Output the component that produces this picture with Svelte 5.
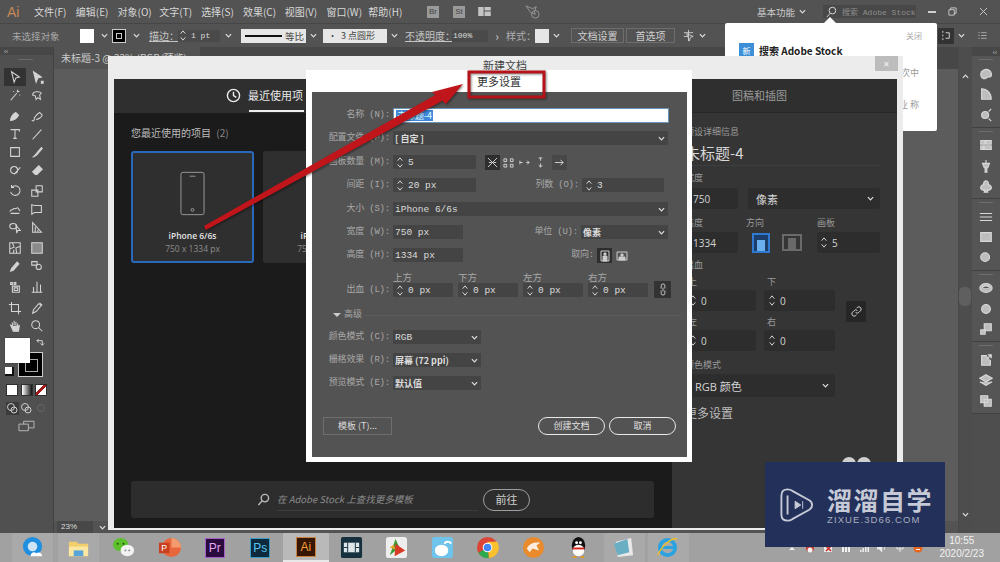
<script>
  const menus = ["文件(F)", "编辑(E)", "对象(O)", "文字(T)", "选择(S)", "效果(C)", "视图(V)", "窗口(W)", "帮助(H)"];

  // left toolbar, two columns, grouped like the real Ai panel
  const toolGroups = [
    [
      "M4 2l9 6-4 1 -2 5z",
      "M4 2l9 6-4 1-2 5zM13 13h2v2h-2z",
      "M3 14L10 6M11 2v3M13 4h-3M6 4h1M13 8h1",
      "M3 8c0-4 8-5 10-2l-2 2 1 5-3-2-2 2-1-4z"
    ],
    [
      "M3 13c0-4 3-8 6-9l3 3c-1 3-5 6-9 6zM3 13l4-4",
      "M2 13c3 2 3-2 3-3 2-3 4-5 6-6l3 3c-1 3-5 5-7 5",
      "M3 3h10v2M8 3v10M6 13h4",
      "M3 14L13 3",
      "M3 3h10v10H3z",
      "M3 14c2-1 3-3 4-4l6-7 1 1-6 7c-1 1-3 2-5 3z",
      "M3 8a4 4 0 1 0 8 0 4 4 0 1 0-8 0M7 13l7-8",
      "M3 10l7-7 4 4-6 6H6z"
    ],
    [
      "M4 4a5.5 5.5 0 1 1-1 5M4 1v3h3",
      "M2 7h7v7H2zM7 2h7v7H7z",
      "M2 11c2-4 3-1 4-3s2 1 4-1 2 3 4 3M3 13h10",
      "M2 3l3 1h8v8H5l-3 2z",
      "M2 7a4 3 0 1 0 8 0 4 3 0 1 0-8 0M9 6l5 6-3 0-1 3z",
      "M3 14V3l10 11zM6 8v6M9 11v3"
    ],
    [
      "M2 2h12v12H2zM5 2l2 5-5 2M14 6l-5 2 1 6M6 14l1-4",
      "M2 2h12v12H2z",
      "M3 14l1-3 6-7 2 2-6 7zM10 3l3 3",
      "M2 3h6v4H2zM7 9a3 3 0 1 0 6 0 3 3 0 1 0-6 0"
    ],
    [
      "M3 3h2v2H3zM7 3h2v2H7zM5 7h8v7H5zM7 9h4v3H7z",
      "M2 14h12M4 14V8M8 14V2M12 14V5"
    ],
    [
      "M4 1v11h11M1 4h11v11",
      "M3 14l1-4 6-7 3 2-6 7zM11 2l3 3",
      "M5 8V4M7 7V2M9 7V3M11 8V5M5 8L3 7l3 7h6l1-7",
      "M2 6.5a4.5 4.5 0 1 0 9 0 4.5 4.5 0 1 0-9 0M10 10l4 4"
    ]
  ];
  const filledTools = ["0-1", "1-0", "1-5", "1-7", "3-2", "5-2"];

  const dockGroups = [
    ["M2 8c0-4 5-6 8-5s5 4 4 7-3 0-5 2-7 2-7-4z", "M3 14V2c6 0 11 5 11 12z", "M3 8a4 4 0 1 0 8 0 4 4 0 1 0-8 0M11 4l3-3M11 12l3 3"],
    ["M2 3h5v4H2zM8 3h6v4H8zM2 9h3v4H2zM6 9h8v4H6z", "M8 1v4M4 5h8l-2 5H6zM7 10h2v5H7z", "M8 2a3 3 0 0 1 2 5 3 3 0 1 1-1 5l1 3H6l1-3a3 3 0 1 1-1-5 3 3 0 0 1 2-5z"],
    ["M1 4h14M1 8h14M1 12h14", "M2 3h12v10H2z", "M2 7a5 5 0 1 0 10 0 5 5 0 1 0-10 0"],
    ["M1 8a7 5 0 1 0 14 0 7 5 0 1 0-14 0M4 8a4 2.5 0 0 1 8 0", "M3 8a5 5 0 1 0 10 0 5 5 0 1 0-10 0", "M6 2h8v8H6zM2 9h5v5H2z"],
    ["M9 3H3v11h10V8M9 7l5-5M10 2h4v4", "M8 2l7 4-7 4-7-4zM1 10l7 4 7-4", "M2 2h8v8H2zM6 6h8v8H6z"]
  ];

  const bleedFields = ["上方", "下方", "左方", "右方"];
</script>

{#snippet chev(cls = "")}
  <svg class="chev {cls}" viewBox="0 0 8 5"><path d="M1 1l3 3 3-3" /></svg>
{/snippet}

{#snippet stepper()}
  <svg class="stepper" viewBox="0 0 8 14"><path d="M1.5 5l2.5-3 2.5 3M1.5 9l2.5 3 2.5-3" /></svg>
{/snippet}

<div class="app">
  <header class="menubar">
    <span class="logo">Ai</span>
    <nav class="menus">
      {#each menus as m}<span>{m}</span>{/each}
    </nav>
    <span class="app-btn br">Br</span>
    <span class="app-btn st">St</span>
    <svg class="layout-ic" viewBox="0 0 14 10"><path d="M0 0h6v10H0zM7 0h7v4H7zM7 5h7v5H7z" /></svg>
    <svg class="rocket" viewBox="0 0 16 16"><path d="M1 2l7 3 4-2-2 5 1 3-5-2z" /><circle cx="11" cy="11" r="4" /></svg>
    <span class="workspace">基本功能</span>
    {@render chev("ws-chev")}
    <div class="searchbox">
      <svg viewBox="0 0 14 14"><circle cx="8" cy="6" r="3.6" /><path d="M5.5 9L2 13" /></svg>
      <span>搜索 Adobe Stock</span>
    </div>
    <div class="winbtns">
      <span class="min"></span>
      <svg viewBox="0 0 10 10"><path d="M1 3h6v6H1zM3 3V1h6v6H7" /></svg>
      <svg viewBox="0 0 10 10"><path d="M1 1l8 8M9 1l-8 8" /></svg>
    </div>
  </header>

  <div class="optbar">
    <span class="nosel">未选择对象</span>
    <span class="swatch fill"></span>
    {@render chev()}
    <span class="swatch strokesw"><i></i></span>
    {@render chev()}
    <span class="ul lbl-stroke">描边：</span>
    <span class="ptfield">{@render stepper()}<b>1 pt</b></span>
    {@render chev()}
    <span class="lineselect"><i></i>等比</span>
    {@render chev()}
    <span class="dotselect">• &nbsp;3 点圆形</span>
    {@render chev()}
    <span class="ul lbl-opacity">不透明度：</span>
    <span class="opfield">100%</span>
    <span class="gt">›</span>
    <span class="ul lbl-style">样式：</span>
    <span class="swatch stylesw"></span>
    {@render chev()}
    <span class="optbtn wide">文档设置</span>
    <span class="optbtn">首选项</span>
    <svg class="arrange" viewBox="0 0 14 14"><path d="M2 4h10M2 8h4M7 1v12M5 5l7 3-3 1-1 4z" /></svg>
    {@render chev()}
    <span class="spring"></span>
    <span class="alignbtn"><svg viewBox="0 0 12 12"><path d="M2 1v2M2 5v2M2 9v2M5 3h4v6H5" /></svg></span>
    {@render chev()}
    <svg class="listic" viewBox="0 0 12 10"><path d="M0 1h2M4 1h8M0 5h2M4 5h8M0 9h2M4 9h8" /></svg>
  </div>

  <div class="main">
    <aside class="toolbar">
      <div class="panelhead"><span>‹‹</span></div>
      <div class="grip"></div>
      {#each toolGroups as group, g}
        <div class="toolgroup">
          {#each group as d, i}
            <span class="tool" class:active={g === 0 && i === 0} class:filled={filledTools.includes(`${g}-${i}`)} class:grad={g === 3 && i === 1}>
              <svg viewBox="0 0 16 16"><path {d} /></svg>
            </span>
          {/each}
        </div>
      {/each}

      <div class="colorwell">
        <span class="wfill"></span>
        <span class="wstroke"><i></i></span>
        <svg class="wswap" viewBox="0 0 10 10"><path d="M1 3h6v5M1 3l2-2M1 3l2 2M7 8l-2-2M7 8l2-2" /></svg>
        <span class="wdefault"></span>
      </div>
      <div class="moderow">
        <span class="m-color"></span>
        <span class="m-grad"></span>
        <span class="m-none"></span>
      </div>
      <div class="moderow draw">
        <span class="d-on"><svg viewBox="0 0 12 12"><circle cx="5" cy="5" r="3.5" /><circle cx="8" cy="8" r="3" /></svg></span>
        <span><svg viewBox="0 0 12 12"><circle cx="5" cy="5" r="3.5" /><circle cx="8" cy="8" r="3" /></svg></span>
        <span class="dim"><svg viewBox="0 0 12 12"><circle cx="6" cy="6" r="3.5" /></svg></span>
      </div>
      <svg class="screenmode" viewBox="0 0 18 12"><path d="M1 4h10v7H1zM6 4V1h11v7h-6" /></svg>
    </aside>

    <section class="canvas">
      <div class="doctabs"><span class="doctab">未标题-3 @ 23% (RGB/预览)</span></div>
      <div class="canvas-area"></div>
      <div class="status"><span class="zoomval">23%</span>{@render chev()}</div>
    </section>

    <div class="vstrip">
      <span class="handle"></span>
      <span class="sc-up">{@render chev("flip")}</span>
      <span class="sc-down">{@render chev()}</span>
    </div>

    <aside class="dock">
      <div class="dockhead">‹‹</div>
      {#each dockGroups as group}
        <div class="dockgroup">
          <span class="dockgrip"></span>
          {#each group as d}
            <svg viewBox="0 0 16 16"><path {d} /></svg>
          {/each}
        </div>
      {/each}
    </aside>
  </div>

  <footer class="taskbar">
    <span class="task on"><svg viewBox="0 0 24 24"><circle cx="12" cy="11" r="10" fill="#1f8fe0" /><circle cx="12" cy="11" r="5" fill="#cfe4f5" /><path d="M10 21c0-4 4-5 6-3 3-2 6 0 6 3z" fill="#fff" /></svg></span>
    <span class="task on"><svg viewBox="0 0 24 24"><path d="M2 6h8l2 2h10v13H2z" fill="#f2cf6b" /><path d="M2 11h20v10H2z" fill="#fbe6a2" /><path d="M7 15h10v6H7z" fill="#58a6d8" /></svg></span>
    <span class="task"><svg viewBox="0 0 24 24"><ellipse cx="9" cy="9" rx="8" ry="7" fill="#5cc12c" /><ellipse cx="16" cy="15" rx="7" ry="6" fill="#f2f2f2" /><circle cx="6" cy="8" r="1" fill="#26500c" /><circle cx="12" cy="8" r="1" fill="#26500c" /><circle cx="14" cy="15" r="1" fill="#888" /><circle cx="18" cy="15" r="1" fill="#888" /></svg></span>
    <span class="task"><svg viewBox="0 0 24 24"><circle cx="14" cy="12" r="10" fill="#e8663c" /><path d="M14 12V2a10 10 0 0 1 10 10z" fill="#f39b6f" /><rect x="1" y="7" width="11" height="11" fill="#c9401f" /><text x="3.5" y="16" class="t-ic white">P</text></svg></span>
    <span class="task"><span class="appic pr">Pr</span></span>
    <span class="task"><span class="appic ps">Ps</span></span>
    <span class="task cur"><span class="appic ai">Ai</span></span>
    <span class="task"><svg viewBox="0 0 24 24"><rect x="1" y="1" width="22" height="22" rx="2" fill="#16303e" /><path d="M4 7h16v10H4z" fill="#dfe6ea" /><path d="M8 7v10M16 7v10M4 12h4M16 12h4" stroke="#16303e" /></svg></span>
    <span class="task"><svg viewBox="0 0 24 24"><rect x="1" y="1" width="22" height="22" rx="3" fill="#eee" /><path d="M5 20L11 3l4 9z" fill="#3c9a34" /><path d="M11 8l10 7-11 6z" fill="#d83a26" /><path d="M5 12l4-3 2 5z" fill="#e8a026" /></svg></span>
    <span class="task"><svg viewBox="0 0 24 24"><rect x="1" y="1" width="22" height="22" rx="3" fill="#6fc4ec" /><ellipse cx="11" cy="15" rx="7" ry="6" fill="#fff" /><path d="M14 8a4 4 0 0 1 7 0" fill="none" stroke="#fff" stroke-width="2" /></svg></span>
    <span class="task"><svg viewBox="0 0 24 24"><circle cx="12" cy="12" r="11" fill="#dc4437" /><path d="M12 12L2.5 17.500a11 11 0 0 0 11 5.400z" fill="#2da94f" /><path d="M12 6h10a11 11 0 0 1-8.500 17z" fill="#fbc02d" /><circle cx="12" cy="12" r="5" fill="#fff" /><circle cx="12" cy="12" r="4" fill="#4285f4" /></svg></span>
    <span class="task"><svg viewBox="0 0 24 24"><circle cx="12" cy="12" r="11" fill="#e98a2c" /><path d="M5 13c3-6 9-7 14-6l-4 3 3 5-7-2-3 4z" fill="#fbeee0" /></svg></span>
    <span class="task"><svg viewBox="0 0 24 24"><ellipse cx="12" cy="10" rx="7" ry="9" fill="#111" /><ellipse cx="12" cy="15" rx="6" ry="6" fill="#fff" /><path d="M6 12h12v2H6z" fill="#d8261c" /><circle cx="10" cy="7" r="1.500" fill="#fff" /><circle cx="14" cy="7" r="1.500" fill="#fff" /><path d="M6 22h4M14 22h4" stroke="#e89a1c" stroke-width="2" /></svg></span>
    <span class="task on narrow"><svg viewBox="0 0 24 24"><path d="M4 6l16-4 2 18-16 2z" fill="#e8e8e8" /><path d="M2 8l14-5 2 14-12 3z" fill="#6aaec4" /></svg></span>
    <span class="task on narrow"><svg viewBox="0 0 24 24"><circle cx="12" cy="12" r="8" fill="none" stroke="#2aa3e0" stroke-width="4" /><path d="M5 12h14" stroke="#2aa3e0" stroke-width="3" /><path d="M2 20C6 10 16 2 22 3" fill="none" stroke="#f0c020" stroke-width="1.500" /></svg></span>
    <div class="tray">
      <svg viewBox="0 0 10 10"><path d="M2 7l3-3 3 3z" fill="#f0f0f0" /></svg>
      <svg viewBox="0 0 10 10"><circle cx="5" cy="5" r="4" fill="#c73a30" /><circle cx="5" cy="7" r="2.500" fill="#f4f4f4" /></svg>
      <svg viewBox="0 0 10 10"><path d="M1 1h8v8H1z" fill="#e8e8e8" /><path d="M3 3l5 5M8 3l-5 5" stroke="#cc2a22" stroke-width="1.500" /></svg>
      <svg viewBox="0 0 10 10"><path d="M1 4h2v5H1zM4 2h2v7H4zM7 3h2v6H7z" fill="#f0f0f0" /></svg>
      <svg viewBox="0 0 10 10"><path d="M1 7h1.500v2H1zM3.500 5H5v4H3.500zM6 3h1.500v6H6zM8.500 1H10v8H8.500z" fill="#ececec" /></svg>
      <svg viewBox="0 0 10 10"><path d="M0 4h2l3-3v8L2 6H0zM7 3c1 1 1 3 0 4" fill="#ececec" stroke="#ececec" stroke-width=".5" /></svg>
      <svg viewBox="0 0 10 10"><path d="M2 3h6v3H2zM5 1v8" stroke="#e4e4e4" /></svg>
      <svg viewBox="0 0 10 10"><circle cx="5" cy="5" r="4.500" fill="#e8641e" /><path d="M3 3.500h4M3 6.500h4" stroke="#fff" /></svg>
    </div>
    <div class="clock"><span>10:55</span><span>2020/2/23</span></div>
  </footer>

  <!-- stock tip -->
  <div class="stockpop">
    <span class="pop-notch"></span>
    <div class="pop-close">关闭</div>
    <div class="pop-title"><span class="pop-ic">新</span><b>搜索 Adobe Stock</b></div>
    <div class="pop-line">次中</div>
    <div class="pop-line second">业 称</div>
  </div>

  <!-- new document window -->
  <div class="newdoc">
    <div class="nd-head"><span class="nd-close">✕</span></div>
    <div class="nd-body">
      <div class="nd-left">
        <div class="tabs">
          <div class="tab current">
            <svg viewBox="0 0 16 16"><circle cx="8" cy="8" r="6.500" /><path d="M8 4v4l3 2" /></svg>
            <span>最近使用项</span>
          </div>
        </div>
        <div class="recent">
          <div class="recent-title">您最近使用的项目 <em>(2)</em></div>
          <div class="cards">
            <div class="card picked">
              <svg viewBox="0 0 26 46"><rect x="1" y="1" width="24" height="44" rx="2" /><path d="M10 5h6" /><circle cx="13" cy="40" r="1.500" /></svg>
              <b>iPhone 6/6s</b>
              <span>750 x 1334 px</span>
            </div>
            <div class="card">
              <svg viewBox="0 0 26 46"><rect x="1" y="1" width="24" height="44" rx="2" /></svg>
              <b>iPhone 6/6s</b>
              <span>750 x 1334 px</span>
            </div>
          </div>
        </div>
        <div class="stockbar">
          <svg viewBox="0 0 14 14"><circle cx="8.500" cy="5.500" r="4" /><path d="M5.500 8.500L1.500 13" /></svg>
          <span class="stockq">在 Adobe Stock 上查找更多模板</span>
          <span class="gobtn">前往</span>
        </div>
      </div>

      <div class="nd-right">
        <div class="tabs right"><span>图稿和插图</span></div>
        <div class="details">
          <div class="d-cap first">预设详细信息</div>
          <div class="d-name">未标题-4</div>
          <div class="d-cap mt-w">宽度</div>
          <div class="d-row">
            <span class="d-field w1">750</span>
            <span class="d-field select">像素{@render chev()}</span>
          </div>
          <div class="d-row caps"><span class="w1">高度</span><span class="c2">方向</span><span>画板</span></div>
          <div class="d-row after-caps">
            <span class="d-field w1">1334</span>
            <span class="orient on"><i></i></span>
            <span class="orient"><i></i></span>
            <span class="d-field w3">{@render stepper()}<em>5</em></span>
          </div>
          <div class="d-cap mt-b">出血</div>
          <div class="bleed">
            <div class="bleed-grid">
              <div><label>上</label><span class="d-field w4">{@render stepper()}<em>0</em></span></div>
              <div><label>下</label><span class="d-field w4">{@render stepper()}<em>0</em></span></div>
              <div><label>左</label><span class="d-field w4">{@render stepper()}<em>0</em></span></div>
              <div><label>右</label><span class="d-field w4">{@render stepper()}<em>0</em></span></div>
            </div>
            <span class="d-link"><svg viewBox="0 0 14 14"><path d="M6 8a2.500 2.500 0 0 0 3.500 0l2-2A2.500 2.500 0 0 0 8 2.500L7 3.500M8 6a2.500 2.500 0 0 0-3.500 0l-2 2A2.500 2.500 0 0 0 6 11.500l1-1" /></svg></span>
          </div>
          <div class="d-cap mt-c">颜色模式</div>
          <span class="d-field select wide">RGB 颜色{@render chev()}</span>
          <div class="d-more">更多设置</div>
        </div>
      </div>
    </div>
    <span class="blob"></span><span class="blob two"></span>
  </div>

  <!-- more settings dialog -->
  <div class="more">
    <div class="more-over">新建文档</div>
    <div class="more-title"><span>更多设置</span></div>
    <div class="more-body">
      <div class="row"><label>名称 (N):</label><span class="inp name"><mark>未标题-4</mark></span></div>
      <div class="row tall"><label>配置文件 (P):</label><span class="inp full cn">[ 自定 ]{@render chev()}</span></div>
      <div class="row">
        <label>画板数量 (M):</label>
        <span class="inp n83">{@render stepper()}5</span>
        <div class="abicons">
          <span class="cur"><svg viewBox="0 0 12 12"><path d="M1 1l10 10M11 1L1 11M2 6h3M7 6h3" /></svg></span>
          <span><svg viewBox="0 0 12 12"><path d="M1 2h3v3H1zM8 2h3v3H8zM1 8h3v3H1zM8 8h3v3H8z" /></svg></span>
          <span><svg viewBox="0 0 12 12"><path d="M1 6h3M1 4v4M8 6h3M9 4l2 2-2 2" /></svg></span>
          <span><svg viewBox="0 0 12 12"><path d="M6 1v3M4 1h4M6 7v4M4 9l2 2 2-2" /></svg></span>
          <span class="box"><svg viewBox="0 0 12 12"><path d="M1 6h9M7 3l3 3-3 3" /></svg></span>
        </div>
      </div>
      <div class="row tall">
        <label>间距 (I):</label>
        <span class="inp n83">{@render stepper()}20 px</span>
        <label class="mid">列数 (O):</label>
        <span class="inp n82">{@render stepper()}3</span>
      </div>
      <div class="row"><label>大小 (S):</label><span class="inp full">iPhone 6/6s{@render chev()}</span></div>
      <div class="row">
        <label>宽度 (W):</label>
        <span class="inp n70">750 px</span>
        <label class="mid w2">单位 (U):</label>
        <span class="inp n87 cn">像素{@render chev()}</span>
      </div>
      <div class="row">
        <label>高度 (H):</label>
        <span class="inp n70">1334 px</span>
        <label class="mid w2 w3">取向:</label>
        <span class="orientbtn cur"><svg viewBox="0 0 12 12"><path d="M2 1h8v10H2z" /><path d="M4 11V6h4v5zM5 3h2v2H5z" class="solid" /></svg></span>
        <span class="orientbtn"><svg viewBox="0 0 12 12"><path d="M1 2h10v8H1z" /><path d="M3 10V7h6v3zM5 4h2v2H5z" class="solid" /></svg></span>
      </div>
      <div class="row bleedrow">
        <label>出血 (L):</label>
        {#each bleedFields as cap}
          <div class="bleedcell">
            <small>{cap}</small>
            <span class="inp n60">{@render stepper()}0 px</span>
          </div>
        {/each}
        <span class="chain"><svg viewBox="0 0 8 14"><path d="M2 6V3a2 2 0 0 1 4 0v3M2 8v3a2 2 0 0 0 4 0V8M4 5v4" /></svg></span>
      </div>
      <div class="advhead"><span class="tri"></span>高级<i></i></div>
      <div class="row"><label>颜色模式 (C):</label><span class="inp n88">RGB{@render chev()}</span></div>
      <div class="row"><label>栅格效果 (R):</label><span class="inp n88 cn">屏幕 (72 ppi){@render chev()}</span></div>
      <div class="row"><label>预览模式 (E):</label><span class="inp n88 cn">默认值{@render chev()}</span></div>
      <div class="more-actions">
        <span class="tplbtn">模板 (T)...</span>
        <span class="spring"></span>
        <span class="pill">创建文档</span>
        <span class="pill">取消</span>
      </div>
    </div>
  </div>

  <!-- red annotation -->
  <svg class="callout" viewBox="0 0 1000 562">
    <rect x="469" y="72" width="75" height="25" class="redbox" />
    <path d="M204 226L437 94 442 101 206 230z" class="redhead" />
    <path d="M463 84L432 92 446 104z" class="redhead" />
  </svg>

  <!-- watermark -->
  <div class="watermark">
    <svg viewBox="0 0 36 38"><path d="M8 2.500C4 2.500 1.500 5 1.500 9v20c0 4 2.500 6.500 6.500 6.500 2 0 3.500-.5 5-1.500l18-10c4-2.500 4-7.500 0-10L13 4C11.500 3 10 2.500 8 2.500zM8 9v20" /><path d="M16 15l6 4-6 4zM24 15v8" class="w2px" /></svg>
    <div class="wm-text">
      <b>溜溜自学</b>
      <span>ZIXUE.3D66.COM</span>
    </div>
  </div>
</div>

<style>
  :global(body) {
    margin: 0;
    background: #535353;
  }
  .app {
    position: relative;
    width: 1000px;
    height: 562px;
    overflow: hidden;
    display: flex;
    flex-direction: column;
    background: #535353;
    color: #cfcfcf;
    font-family: "Noto Sans CJK SC", "Liberation Sans", sans-serif;
    font-size: 10px;
  }
  svg {
    fill: none;
    stroke: currentColor;
    display: block;
  }
  .chev {
    width: 7px;
    height: 5px;
    stroke-width: 1.400;
    flex: none;
    color: #ddd;
  }
  .chev.flip {
    transform: rotate(180deg);
  }
  .stepper {
    width: 8px;
    height: 13px;
    flex: none;
    color: #ddd;
    margin-right: 4px;
  }
  .spring {
    flex: 1;
  }

  /* menu bar */
  .menubar {
    height: 23px;
    flex: none;
    display: flex;
    align-items: center;
    background: #535353;
    position: relative;
  }
  .logo {
    width: 34px;
    padding-left: 7px;
    box-sizing: border-box;
    font: 14px "Liberation Sans", sans-serif;
    color: #c88a56;
  }
  .menus {
    display: flex;
    width: 376px;
    font-size: 10px;
    color: #d8d8d8;
  }
  .menus span {
    width: 42px;
    white-space: nowrap;
  }
  .app-btn {
    width: 12px;
    height: 12px;
    background: #9a9a9a;
    color: #444;
    font: 8px/12px "Liberation Sans", sans-serif;
    text-align: center;
    margin-left: 17px;
  }
  .app-btn.st {
    margin-left: 14px;
  }
  .layout-ic {
    width: 13px;
    height: 9px;
    fill: #c4c4c4;
    stroke: none;
    margin-left: 13px;
  }
  .rocket {
    width: 15px;
    height: 15px;
    margin-left: 34px;
    color: #999;
  }
  .workspace {
    margin-left: 217px;
    width: 40px;
    white-space: nowrap;
    font-size: 9.500px;
    color: #ccc;
  }
  .ws-chev {
    margin-left: 2px;
  }
  .searchbox {
    margin-left: 17px;
    width: 93px;
    height: 13px;
    background: #484848;
    display: flex;
    align-items: center;
    gap: 4px;
    color: #8d8d8d;
    font: 8px "Liberation Mono", "Noto Sans CJK SC", monospace;
    white-space: nowrap;
  }
  .searchbox svg {
    width: 13px;
    height: 13px;
    color: #ddd;
    flex: none;
    margin-left: 2px;
  }
  .winbtns {
    margin-left: 12px;
    display: flex;
    align-items: center;
    gap: 12px;
    color: #cfcfcf;
  }
  .winbtns svg {
    width: 9px;
    height: 9px;
    margin-left: 0;
  }
  .winbtns svg:last-child {
    margin-left: 10px;
  }
  .min {
    width: 8px;
    height: 2px;
    background: #cfcfcf;
  }

  /* control bar */
  .optbar {
    height: 24px;
    flex: none;
    display: flex;
    align-items: center;
    background: #535353;
    border-top: 1px solid #464646;
    box-sizing: border-box;
    color: #bbb;
    white-space: nowrap;
  }
  .nosel {
    width: 44px;
    margin: 0 24px 0 12px;
    color: #a8a8a8;
    font-size: 9.500px;
  }
  .swatch {
    width: 14px;
    height: 14px;
    background: #fff;
    flex: none;
  }
  .swatch.fill {
    margin-right: 3px;
  }
  .optbar > .chev {
    margin: 0 4px;
  }
  .strokesw {
    background: #000;
    border: 1px solid #ccc;
    box-sizing: border-box;
    margin-right: 3px;
    display: flex;
    align-items: center;
    justify-content: center;
  }
  .strokesw i {
    width: 6px;
    height: 6px;
    border: 1px solid #ccc;
    box-sizing: border-box;
  }
  .ul {
    text-decoration: underline;
    font-size: 10px;
    color: #c4c4c4;
  }
  .lbl-stroke {
    margin-left: 5px;
    width: 29px;
  }
  .ptfield {
    width: 42px;
    height: 12px;
    display: flex;
    align-items: center;
    background: #4a4a4a;
    font: 8px "Liberation Mono", monospace;
    color: #ddd;
    margin-right: 1px;
    flex: none;
  }
  .ptfield b {
    font-weight: 400;
  }
  .ptfield .stepper {
    margin-left: 1px;
  }
  .lineselect {
    width: 65px;
    height: 14px;
    margin-left: 5px;
    background: #e6e6e6;
    color: #444;
    display: flex;
    align-items: center;
    font-size: 9.500px;
    gap: 3px;
    padding-left: 4px;
    box-sizing: border-box;
    flex: none;
  }
  .lineselect i {
    width: 37px;
    height: 2px;
    background: #111;
  }
  .dotselect {
    width: 64px;
    height: 14px;
    margin-left: 2px;
    background: #e6e6e6;
    color: #444;
    font-size: 9px;
    line-height: 14px;
    padding-left: 5px;
    box-sizing: border-box;
    flex: none;
  }
  .lbl-opacity {
    margin-left: 3px;
    width: 47px;
    white-space: nowrap;
    flex: none;
  }
  .opfield {
    width: 36px;
    height: 12px;
    background: #4a4a4a;
    color: #ddd;
    font: 8px/12px "Liberation Mono", monospace;
    padding-left: 1px;
    box-sizing: border-box;
    flex: none;
  }
  .gt {
    width: 18px;
    text-align: center;
    font-size: 12px;
    color: #ccc;
  }
  .lbl-style {
    width: 29px;
    text-decoration: none;
    color: #b0b0b0;
  }
  .stylesw {
    background: #e6e6e6;
  }
  .optbtn {
    width: 49px;
    height: 15px;
    line-height: 14px;
    border: 1px solid #6d6d6d;
    box-sizing: border-box;
    text-align: center;
    color: #d0d0d0;
    margin-left: 2px;
    flex: none;
  }
  .optbtn.wide {
    width: 53px;
    margin-left: 7px;
  }
  .arrange {
    width: 13px;
    height: 13px;
    margin-left: 7px;
    color: #ccc;
    flex: none;
  }
  .alignbtn {
    width: 16px;
    height: 16px;
    background: #333;
    color: #ddd;
    display: flex;
    align-items: center;
    justify-content: center;
  }
  .alignbtn svg {
    width: 11px;
    height: 11px;
  }
  .listic {
    width: 9px;
    height: 7px;
    margin: 0 13px 0 9px;
    color: #ccc;
  }

  /* main row */
  .main {
    flex: 1;
    min-height: 0;
    display: flex;
  }
  .toolbar {
    width: 53px;
    flex: none;
    background: #505050;
    border-right: 1px solid #424242;
    box-sizing: content-box;
    display: flex;
    flex-direction: column;
    align-items: flex-start;
  }
  .panelhead {
    height: 8px;
    width: 100%;
    background: #474747;
    color: #ccc;
    font-size: 7px;
    line-height: 7px;
    padding-left: 4px;
    box-sizing: border-box;
  }
  .grip {
    width: 15px;
    height: 1px;
    margin: 4px 0 8px 18px;
    background: #6a6a6a;
  }
  .toolgroup {
    display: grid;
    grid-template-columns: 22px 22px;
    grid-auto-rows: 18px;
    padding-left: 4px;
    margin-bottom: 3px;
  }
  .tool {
    display: flex;
    align-items: center;
    justify-content: center;
    color: #d4d4d4;
  }
  .tool svg {
    width: 14px;
    height: 14px;
    stroke-width: 1.200;
  }
  .tool.active {
    background: #333;
  }
  .tool.filled svg {
    fill: #d4d4d4;
  }
  .tool.grad svg {
    fill: #8a8a8a;
  }
  .colorwell {
    position: relative;
    width: 50px;
    height: 42px;
    flex: none;
  }
  .wfill {
    position: absolute;
    left: 5px;
    top: 0;
    width: 25px;
    height: 25px;
    background: #fff;
    z-index: 1;
    box-shadow: 0 0 1px #222;
  }
  .wstroke {
    position: absolute;
    left: 18px;
    top: 14px;
    width: 25px;
    height: 25px;
    background: #000;
    border: 1px solid #ccc;
    box-sizing: border-box;
  }
  .wstroke i {
    position: absolute;
    left: 6px;
    top: 6px;
    width: 11px;
    height: 11px;
    border: 1px solid #aaa;
  }
  .wswap {
    position: absolute;
    left: 36px;
    top: 0;
    width: 9px;
    height: 9px;
    color: #ddd;
  }
  .wdefault {
    position: absolute;
    left: 5px;
    top: 29px;
    width: 7px;
    height: 7px;
    background: #fff;
    border-right: 2px solid #111;
    border-bottom: 2px solid #111;
    z-index: 2;
  }
  .moderow {
    display: grid;
    grid-template-columns: 14.500px 14.500px 14.500px;
    justify-items: center;
    padding-left: 5px;
    margin-top: 4px;
  }
  .moderow > span {
    width: 10px;
    height: 10px;
    display: block;
    border: 1px solid #2e2e2e;
  }
  .m-color {
    background: #fff;
  }
  .m-grad {
    background: linear-gradient(90deg, #fff, #111);
  }
  .m-none {
    background: linear-gradient(135deg, #fff 40%, #a01818 40%, #a01818 60%, #fff 60%);
  }
  .moderow.draw {
    margin-top: 6px;
  }
  .moderow.draw > span {
    border: 0;
    width: 13px;
    height: 13px;
    color: #ccc;
  }
  .moderow.draw .d-on {
    background: #3a3a3a;
  }
  .moderow.draw .dim {
    color: #666;
  }
  .moderow.draw svg {
    width: 12px;
    height: 12px;
  }
  .screenmode {
    width: 17px;
    height: 12px;
    margin: 5px 0 0 18px;
    color: #bbb;
  }

  .canvas {
    flex: 1;
    min-width: 0;
    display: flex;
    flex-direction: column;
    background: #5a5a5a;
  }
  .doctabs {
    height: 22px;
    flex: none;
    background: #474747;
    display: flex;
  }
  .doctab {
    width: 146px;
    background: #535353;
    color: #ccc;
    padding-left: 7px;
    box-sizing: border-box;
    line-height: 22px;
    white-space: nowrap;
    overflow: hidden;
  }
  .canvas-area {
    flex: 1;
    background: #5c5c5c;
  }
  .status {
    height: 12px;
    flex: none;
    display: flex;
    align-items: center;
    background: #535353;
  }
  .zoomval {
    width: 36px;
    height: 12px;
    background: #484848;
    font: 8px/12px "Liberation Sans", sans-serif;
    color: #ddd;
    padding-left: 4px;
    margin-left: 3px;
    box-sizing: border-box;
  }
  .status .chev {
    margin-left: 6px;
  }
  .vstrip {
    width: 14px;
    flex: none;
    background: #4d4d4d;
    border-left: 1px solid #484848;
    position: relative;
    box-sizing: border-box;
  }
  .handle {
    position: absolute;
    left: 0;
    top: 240px;
    width: 12px;
    height: 19px;
    border-radius: 5px;
    background: #5f5f5f;
  }
  .sc-up,
  .sc-down {
    position: absolute;
    left: 3px;
  }
  .sc-up {
    top: 27px;
  }
  .sc-down {
    top: 465px;
  }
  .dock {
    width: 28px;
    flex: none;
    background: #4e4e4e;
    color: #d8d8d8;
    display: flex;
    flex-direction: column;
  }
  .dockhead {
    height: 9px;
    background: #474747;
    font-size: 7px;
    line-height: 8px;
    text-align: right;
    padding-right: 3px;
    color: #ccc;
    flex: none;
  }
  .dockgroup {
    display: flex;
    flex-direction: column;
    align-items: center;
    gap: 6.500px;
    padding: 3px 0 5px;
    border-bottom: 1px solid #404040;
    background: #555;
  }
  .dockgroup svg {
    width: 14px;
    height: 14px;
    stroke-width: 1.300;
    fill: #bdbdbd;
  }
  .dockgrip {
    width: 14px;
    height: 1px;
    background: #6d6d6d;
  }

  /* taskbar */
  .taskbar {
    height: 29px;
    flex: none;
    background: #a1a1a1;
    display: flex;
    align-items: center;
    padding-left: 10px;
    box-sizing: border-box;
    position: relative;
  }
  .task {
    width: 45.500px;
    height: 29px;
    flex: none;
    display: flex;
    align-items: center;
    justify-content: center;
    box-sizing: border-box;
  }
  .task svg {
    width: 23px;
    height: 23px;
    stroke: none;
    fill: none;
  }
  .task.on {
    background: linear-gradient(90deg, transparent 2px, #a9a9a9 2px, #a9a9a9 43px, transparent 43px);
  }
  .task.cur {
    background: #b9b9b9;
    border-bottom: 2px solid #e8e8e8;
  }
  .task.narrow {
    width: 44px;
  }
  .appic {
    width: 20px;
    height: 20px;
    display: block;
    text-align: center;
    font: 12px/18px "Liberation Sans", sans-serif;
    box-sizing: border-box;
    border: 1.500px solid;
  }
  .appic.pr {
    background: #2a0a3c;
    color: #e3a6f5;
    border-color: #a45cc6;
  }
  .appic.ps {
    background: #0d2a3d;
    color: #57c4f0;
    border-color: #3a9cc8;
  }
  .appic.ai {
    background: #351704;
    color: #f39a3a;
    border-color: #c8803c;
  }
  .t-ic {
    font: 9px "Liberation Sans", sans-serif;
    fill: #fff;
    stroke: none;
  }
  .tray {
    position: absolute;
    left: 787px;
    top: 10px;
    display: flex;
    gap: 8px;
  }
  .tray svg {
    width: 10px;
    height: 10px;
    stroke: none;
  }
  .clock {
    position: absolute;
    right: 16px;
    top: 1px;
    display: flex;
    flex-direction: column;
    align-items: center;
    line-height: 13px;
    color: #f2f2f2;
    font: 10px/13px "Liberation Sans", sans-serif;
  }

  /* stock tip */
  .stockpop {
    position: absolute;
    left: 725px;
    top: 23px;
    width: 212px;
    height: 108px;
    background: #fff;
    border-radius: 2px;
    color: #222;
  }
  .pop-notch {
    position: absolute;
    left: 99px;
    top: -6px;
    border: 6px solid transparent;
    border-top: 0;
    border-bottom-color: #fff;
  }
  .pop-close {
    text-align: right;
    padding: 7px 15px 0 0;
    color: #aaa;
    font-size: 8px;
  }
  .pop-title {
    display: flex;
    align-items: center;
    gap: 5px;
    margin: 2px 0 0 14px;
    font-size: 10px;
  }
  .pop-ic {
    width: 15px;
    height: 15px;
    background: #3d8fd8;
    color: #fff;
    font-size: 8px;
    line-height: 15px;
    text-align: center;
  }
  .pop-line {
    text-align: right;
    margin: 8px 18px 0 0;
    color: #999;
    font-size: 9px;
  }
  .pop-line.second {
    margin-top: 19px;
  }

  /* new document */
  .newdoc {
    position: absolute;
    left: 108px;
    top: 56px;
    width: 795px;
    height: 474px;
    background: #ececec;
    display: flex;
    flex-direction: column;
  }
  .nd-head {
    height: 23px;
    flex: none;
    position: relative;
  }
  .nd-close {
    position: absolute;
    right: 5px;
    top: 0;
    width: 23px;
    height: 15px;
    background: #bcbcbc;
    color: #f4f4f4;
    font-size: 8px;
    line-height: 15px;
    text-align: center;
  }
  .nd-body {
    flex: 1;
    min-height: 0;
    margin: 0 6px 2px;
    display: flex;
  }
  .nd-left {
    width: 558px;
    flex: none;
    background: #1b1b1b;
    display: flex;
    flex-direction: column;
  }
  .nd-right {
    flex: 1;
    background: #353535;
    display: flex;
    flex-direction: column;
  }
  .tabs {
    height: 34px;
    flex: none;
    background: #2f2f2f;
    display: flex;
    padding-left: 112px;
    box-sizing: border-box;
    color: #e8e8e8;
    font-size: 11px;
  }
  .tab {
    display: flex;
    align-items: center;
    gap: 7px;
    height: 34px;
    position: relative;
    box-sizing: border-box;
    padding-bottom: 2px;
  }
  .tab svg {
    width: 15px;
    height: 15px;
    stroke-width: 1.500;
    color: #eee;
  }
  .tab.current::after {
    content: "";
    position: absolute;
    right: -1px;
    bottom: 1px;
    width: 55px;
    height: 2px;
    background: #eee;
  }
  .tabs.right {
    background: #2f2f2f;
    padding: 0 0 2px 60px;
    color: #9a9a9a;
    align-items: center;
    border-bottom: 1px solid #272727;
  }
  .recent {
    flex: 1;
    padding: 13px 17px 0;
  }
  .recent-title {
    color: #bdbdbd;
    font-size: 10px;
    line-height: 14px;
  }
  .recent-title em {
    font-style: normal;
    color: #888;
    margin-left: 3px;
  }
  .cards {
    display: flex;
    gap: 9px;
    margin-top: 11px;
  }
  .card {
    width: 123px;
    height: 112px;
    box-sizing: border-box;
    background: #2f2f2f;
    border-radius: 3px;
    display: flex;
    flex-direction: column;
    align-items: center;
    padding-top: 20px;
    color: #8c8c8c;
    font: 8.500px/13px "Open Sans", "Liberation Sans", sans-serif;
  }
  .card.picked {
    border: 2px solid #2a68bc;
    padding-top: 18px;
  }
  .card svg {
    width: 25px;
    height: 45px;
    color: #9a9a9a;
    margin-bottom: 13px;
  }
  .card b {
    color: #e4e4e4;
    font-weight: 600;
  }
  .stockbar {
    margin: 0 18px 10px 17px;
    height: 37px;
    flex: none;
    background: #2d2d2d;
    border-radius: 3px;
    display: flex;
    align-items: center;
    padding-left: 126px;
    box-sizing: border-box;
    color: #8a8a8a;
  }
  .stockbar svg {
    width: 13px;
    height: 13px;
    stroke-width: 1.500;
    color: #bbb;
    margin-right: 7px;
    flex: none;
  }
  .stockq {
    width: 201px;
    flex: none;
    font-style: italic;
    font-size: 9.500px;
    line-height: 21px;
    border-bottom: 1px solid #3c3c3c;
    white-space: nowrap;
  }
  .gobtn {
    width: 47px;
    height: 22px;
    margin-left: 5px;
    border: 1.500px solid #9d9d9d;
    border-radius: 11px;
    box-sizing: border-box;
    text-align: center;
    line-height: 19px;
    font-size: 11px;
    color: #cfcfcf;
  }
  .details {
    color: #9a9a9a;
    margin-left: 13px;
    font-size: 9px;
    display: flex;
    flex-direction: column;
    align-items: flex-start;
    width: 195px;
  }
  .d-cap {
    line-height: 12px;
    white-space: nowrap;
  }
  .d-cap.first {
    margin-top: 13px;
  }
  .d-name {
    font-size: 15px;
    line-height: 24px;
    color: #d8d8d8;
    width: 100%;
    margin-top: 3px;
    border-bottom: 1px solid #3e3e3e;
  }
  .mt-w {
    margin-top: 6px;
  }
  .d-row {
    display: flex;
    align-items: center;
    margin-top: 4px;
    width: 100%;
  }
  .d-row.after-caps {
    margin-top: 3px;
  }
  .d-field {
    height: 21px;
    background: #2d2d2d;
    border-radius: 2px;
    display: flex;
    align-items: center;
    color: #d4d4d4;
    box-sizing: border-box;
    padding-left: 8px;
    font: 10px "Open Sans", "Noto Sans CJK SC", sans-serif;
  }
  .d-field em {
    font-style: normal;
  }
  .w1 {
    width: 53px;
    flex: none;
  }
  .d-field.select {
    flex: 1;
    margin-left: 10px;
    justify-content: space-between;
    padding: 0 6px 0 8px;
    font-size: 11px;
  }
  .d-field.select.wide {
    margin: 3px 0 0;
    width: 150px;
    flex: none;
    height: 23px;
    padding-left: 10px;
  }
  .caps {
    margin-top: 8px;
    line-height: 12px;
  }
  .caps .c2 {
    margin: 0 53px 0 8px;
  }
  .orient {
    width: 18px;
    height: 20px;
    border: 2px solid #6a6a6a;
    box-sizing: border-box;
    margin-left: 14px;
    display: flex;
    align-items: flex-end;
    justify-content: center;
    flex: none;
  }
  .orient.on {
    margin-left: 14px;
    border-color: #2f7ad0;
    background: #1c3e6a;
  }
  .orient i {
    width: 8px;
    height: 11px;
    background: #6a6a6a;
  }
  .orient.on i {
    background: #6ab0ee;
  }
  .orient + .orient {
    width: 20px;
    height: 17px;
    margin-left: 12px;
  }
  .w3 {
    width: 63px;
    margin-left: 15px;
    padding-left: 3px;
    flex: none;
  }
  .mt-b {
    margin-top: 6px;
  }
  .bleed {
    display: flex;
    align-items: center;
    gap: 11px;
  }
  .bleed-grid {
    display: grid;
    grid-template-columns: 71px 71px;
    column-gap: 8px;
  }
  .bleed-grid label {
    display: block;
    line-height: 13px;
    margin: 4px 0 0 3px;
  }
  .w4 {
    width: 71px;
    margin-top: 2px;
    padding-left: 4px;
  }
  .d-link {
    width: 20px;
    height: 21px;
    background: #262626;
    display: flex;
    align-items: center;
    justify-content: center;
    color: #ddd;
  }
  .d-link svg {
    width: 13px;
    height: 13px;
  }
  .mt-c {
    margin-top: 8px;
  }
  .d-more {
    margin-top: 7px;
    font-size: 12px;
    color: #bdbdbd;
  }
  .blob {
    position: absolute;
    left: 734px;
    top: 401px;
    width: 14px;
    height: 14px;
    border-radius: 50%;
    background: #cfcfcf;
  }
  .blob.two {
    left: 749px;
  }

  /* more settings */
  .more {
    position: absolute;
    left: 306px;
    top: 70px;
    width: 386px;
    height: 392px;
    background: #fff;
    display: flex;
    flex-direction: column;
  }
  .more-over {
    position: absolute;
    left: 12px;
    right: 0;
    top: -11px;
    height: 11px;
    line-height: 13px;
    text-align: center;
    color: #444;
    font-size: 11px;
    overflow: hidden;
  }
  .more-title {
    height: 22px;
    flex: none;
    padding-left: 171px;
    line-height: 22px;
    color: #333;
    font-size: 11px;
  }
  .more-body {
    margin: 0 5px 5px 6px;
    flex: 1;
    min-height: 0;
    background: #535353;
    padding-top: 16px;
    box-sizing: border-box;
    display: flex;
    flex-direction: column;
    font: 9px "Liberation Mono", "Noto Sans CJK SC", monospace;
    color: #a8a8a8;
  }
  .row {
    height: 23px;
    flex: none;
    display: flex;
    align-items: flex-start;
    white-space: nowrap;
  }
  .row.tall {
    height: 24px;
  }
  .row > label {
    width: 81px;
    line-height: 14px;
    text-align: right;
    flex: none;
    letter-spacing: -0.200px;
    padding-right: 3px;
    box-sizing: border-box;
  }
  .row > label.mid {
    width: 106px;
  }
  .row > label.mid.w2 {
    width: 118px;
  }
  .row > label.mid.w2.w3 {
    width: 119px;
  }
  .inp {
    height: 14px;
    background: #444;
    display: flex;
    align-items: center;
    color: #dcdcdc;
    box-sizing: border-box;
    padding: 0 3px 0 2px;
    flex: none;
    font-size: 9.500px;
    justify-content: flex-start;
  }
  .inp .stepper {
    margin: 0 4px 0 1px;
  }
  .inp > .chev {
    margin-left: auto;
  }
  .inp.cn {
    font-weight: 700;
    font-family: "Noto Sans CJK SC", "Liberation Mono", monospace;
    font-size: 9px;
  }
  .inp.name {
    width: 276px;
    height: 15px;
    background: #fff;
    border: 1px solid #6a93b8;
    color: #fff;
  }
  .inp.name mark {
    background: #3f86d8;
    color: #dff;
    font-family: "Noto Sans CJK SC", sans-serif;
    padding: 0 1px;
    font-size: 9px;
    line-height: 11px;
  }
  .inp.full {
    width: 275px;
  }
  .n83 {
    width: 83px;
  }
  .n82 {
    width: 82px;
  }
  .n70 {
    width: 70px;
  }
  .n87 {
    width: 87px;
  }
  .n60 {
    width: 60px;
  }
  .n88 {
    width: 88px;
  }
  .abicons {
    display: flex;
    align-items: center;
    margin-left: 9px;
    gap: 1px;
    color: #d8d8d8;
  }
  .abicons span {
    width: 15px;
    height: 15px;
    display: flex;
    align-items: center;
    justify-content: center;
  }
  .abicons svg {
    width: 11px;
    height: 11px;
  }
  .abicons .cur {
    background: #2e2e2e;
  }
  .abicons .box {
    background: #474747;
    margin-left: 3px;
  }
  .orientbtn {
    width: 15px;
    height: 15px;
    display: flex;
    align-items: center;
    justify-content: center;
    color: #ccc;
    margin-right: 2px;
  }
  .orientbtn.cur {
    background: #2e2e2e;
  }
  .orientbtn svg {
    width: 12px;
    height: 12px;
  }
  .solid {
    fill: currentColor;
  }
  .row.bleedrow {
    height: 40px;
    align-items: flex-end;
    padding-bottom: 14px;
    box-sizing: border-box;
    gap: 5px;
  }
  .bleedrow > label {
    margin-right: -5px;
  }
  .bleedcell {
    display: flex;
    flex-direction: column;
  }
  .bleedcell small {
    font-size: 9.500px;
    line-height: 9px;
  }
  .chain {
    width: 17px;
    height: 17px;
    background: #333;
    color: #ccc;
    display: flex;
    align-items: center;
    justify-content: center;
    margin-left: 1px;
    margin-bottom: -1px;
  }
  .chain svg {
    width: 8px;
    height: 13px;
  }
  .advhead {
    height: 12px;
    margin: -2px 6px 0 21px;
    display: flex;
    align-items: center;
    gap: 3px;
    flex: none;
    line-height: 12px;
  }
  .advhead i {
    flex: 1;
    height: 1px;
    background: #5c5c5c;
  }
  .tri {
    border: 4px solid transparent;
    border-top: 4px solid #ccc;
    border-bottom: 0;
    width: 0;
    height: 0;
  }
  .advhead + .row {
    margin-top: 9px;
  }
  .more-actions {
    display: flex;
    align-items: center;
    margin: 18px 11px 0 11px;
    gap: 4px;
    font-family: "Noto Sans CJK SC", "Liberation Mono", monospace;
  }
  .tplbtn {
    width: 69px;
    height: 18px;
    border: 1px solid #6e6e6e;
    box-sizing: border-box;
    text-align: center;
    line-height: 16px;
    color: #dcdcdc;
  }
  .pill {
    width: 67px;
    height: 18px;
    border: 1.500px solid #e8e8e8;
    border-radius: 9px;
    box-sizing: border-box;
    text-align: center;
    line-height: 15px;
    color: #e0e0e0;
  }

  /* annotation */
  .callout {
    position: absolute;
    left: 0;
    top: 0;
    width: 1000px;
    height: 562px;
    pointer-events: none;
    filter: drop-shadow(1px 1px 1px rgba(0, 0, 0, 0.45));
  }
  .redbox {
    stroke: #b31319;
    stroke-width: 3;
    fill: none;
  }
  .redhead {
    fill: #c0151a;
    stroke: none;
  }

  /* watermark */
  .watermark {
    position: absolute;
    left: 765px;
    top: 462px;
    width: 180px;
    height: 85px;
    background: #22305a;
    color: #c6cad6;
    display: flex;
    align-items: center;
    gap: 13px;
    padding-left: 15px;
    box-sizing: border-box;
  }
  .watermark svg {
    width: 34px;
    height: 36px;
    stroke-width: 2;
    flex: none;
  }
  .w2px {
    fill: currentColor;
    stroke-width: 1;
  }
  .wm-text {
    display: flex;
    flex-direction: column;
  }
  .wm-text b {
    font-size: 25px;
    line-height: 30px;
    letter-spacing: 1.500px;
    white-space: nowrap;
  }
  .wm-text span {
    font: 9.500px/12px "Liberation Sans", sans-serif;
    letter-spacing: 1.100px;
    color: #a9aebf;
    white-space: nowrap;
  }
</style>
